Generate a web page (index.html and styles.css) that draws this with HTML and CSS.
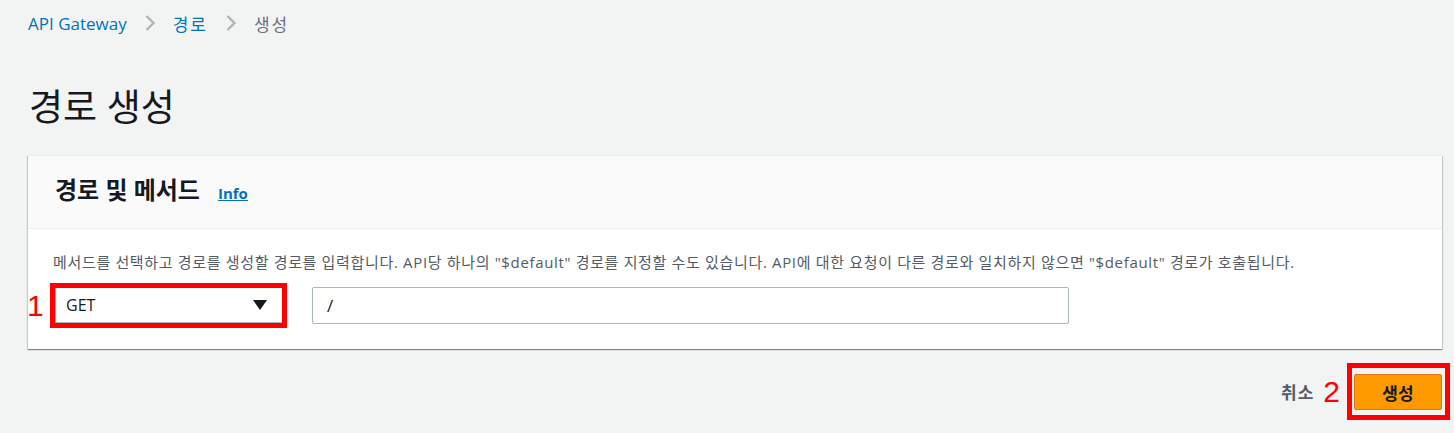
FILE: index.html
```html
<!DOCTYPE html>
<html lang="ko">
<head>
<meta charset="utf-8">
<link rel="stylesheet" href="styles.css">
</head>
<body>
<nav class="crumbs">
  <a class="crumb-link">API Gateway</a>
  <svg class="sep" width="12" height="18" viewBox="0 0 12 18"><path d="M2.5 2 L9.5 9 L2.5 16" fill="none" stroke="#aab7b8" stroke-width="2.4"/></svg>
  <a class="crumb-link ko">경로</a>
  <svg class="sep" width="12" height="18" viewBox="0 0 12 18"><path d="M2.5 2 L9.5 9 L2.5 16" fill="none" stroke="#aab7b8" stroke-width="2.4"/></svg>
  <span class="crumb-current ko">생성</span>
</nav>
<h1 class="title">경로 생성</h1>
<section class="card">
  <header class="card-head">
    <h2 class="card-title">경로 및 메서드</h2>
    <a class="info">Info</a>
  </header>
  <div class="card-body">
    <p class="desc">메서드를 선택하고 경로를 생성할 경로를 입력합니다. API당 하나의 "$default" 경로를 지정할 수도 있습니다. API에 대한 요청이 다른 경로와 일치하지 않으면 "$default" 경로가 호출됩니다.</p>
    <div class="row">
      <span class="mark mark-1">1</span>
      <div class="hl hl-select">
        <div class="select">
          <span>GET</span>
          <svg width="14" height="10" viewBox="0 0 14 10"><path d="M0 0 H14 L7 10 Z" fill="#16191f"/></svg>
        </div>
      </div>
      <div class="input">/</div>
    </div>
  </div>
</section>
<div class="actions">
  <span class="cancel">취소</span>
  <span class="mark mark-2">2</span>
  <div class="hl hl-btn">
    <div class="btn">생성</div>
  </div>
</div>
</body>
</html>
```

FILE: styles.css
```css
body {
  margin: 0;
  background: #f2f3f3;
  font-family: "Open Sans", "Noto Sans CJK KR", sans-serif;
  color: #16191f;
}
.crumbs {
  display: flex;
  align-items: center;
  gap: 17px;
  padding: 10px 0 0 28px;
  height: 26px;
  font-size: 17px;
}
.crumb-link { color: #0073bb; }
.crumb-current { color: #687078; }
.ko { letter-spacing: 2px; }
.sep { display: block; }
.title {
  margin: 0;
  padding: 51px 0 0 29px;
  height: 53px;
  font-size: 37px;
  font-weight: 400;
  line-height: 40px;
  color: #16191f;
}
.card {
  margin: 15px 12px 0 28px;
  background: #fff;
  box-shadow: 0 1px 1px 0 rgba(0,28,36,.3), 1px 1px 1px 0 rgba(0,28,36,.15), -1px 1px 1px 0 rgba(0,28,36,.15);
}
.card-head {
  display: flex;
  align-items: baseline;
  padding: 16px 27px 0;
  background: #fafafa;
  border-top: 1px solid #eaeded;
  border-bottom: 1px solid #eaeded;
  box-sizing: border-box;
  height: 74px;
}
.card-title {
  margin: 0;
  font-size: 24px;
  font-weight: 700;
  line-height: 36px;
}
.info {
  margin-left: 18px;
  font-size: 15px;
  font-weight: 700;
  color: #0073bb;
  text-decoration: underline;
}
.card-body {
  padding: 22px 0 21px 0;
}
.desc {
  margin: 0 0 10px 25px;
  font-size: 15px;
  line-height: 22px;
  color: #545b64;
  letter-spacing: 0.66px;
  white-space: nowrap;
}
.row {
  display: flex;
  align-items: center;
  height: 45px;
}
.mark {
  color: #ff0000;
  font-family: "Liberation Sans", sans-serif;
  font-size: 30px;
  line-height: 30px;
}
.mark-1 { width: 23px; text-align: left; margin-left: -1px; }
.hl {
  border: 5px solid #ff0000;
  box-sizing: border-box;
}
.hl-select {
  width: 237px;
  height: 45px;
  padding: 0;
}
.select {
  display: flex;
  align-items: center;
  justify-content: space-between;
  height: 100%;
  padding: 0 15px 0 10px;
  border-left: 1px solid #aab7b8;
  border-bottom: 1px solid #aab7b8;
  font-size: 16px;
  box-sizing: border-box;
}
.input {
  margin-left: 25px;
  width: 757px;
  height: 37px;
  box-sizing: border-box;
  border: 1px solid #aab7b8;
  border-radius: 2px;
  padding: 0 14px;
  font-size: 17px;
  line-height: 35px;
}
.actions {
  display: flex;
  justify-content: flex-end;
  align-items: center;
  margin: 14px 4px 0 0;
}
.cancel {
  font-size: 17px;
  font-weight: 700;
  color: #545b64;
  letter-spacing: 1px;
  margin-right: 9px;
}
.mark-2 { margin-right: 7px; }
.hl-btn {
  width: 103px;
  height: 57px;
  padding: 6px 3px 5px 2px;
  display: flex;
}
.btn {
  flex: 1;
  background: #ff9900;
  border: 1px solid #ec7211;
  border-radius: 2px;
  display: flex;
  align-items: center;
  justify-content: center;
  font-size: 17px;
  font-weight: 700;
  color: #16191f;
}
```
